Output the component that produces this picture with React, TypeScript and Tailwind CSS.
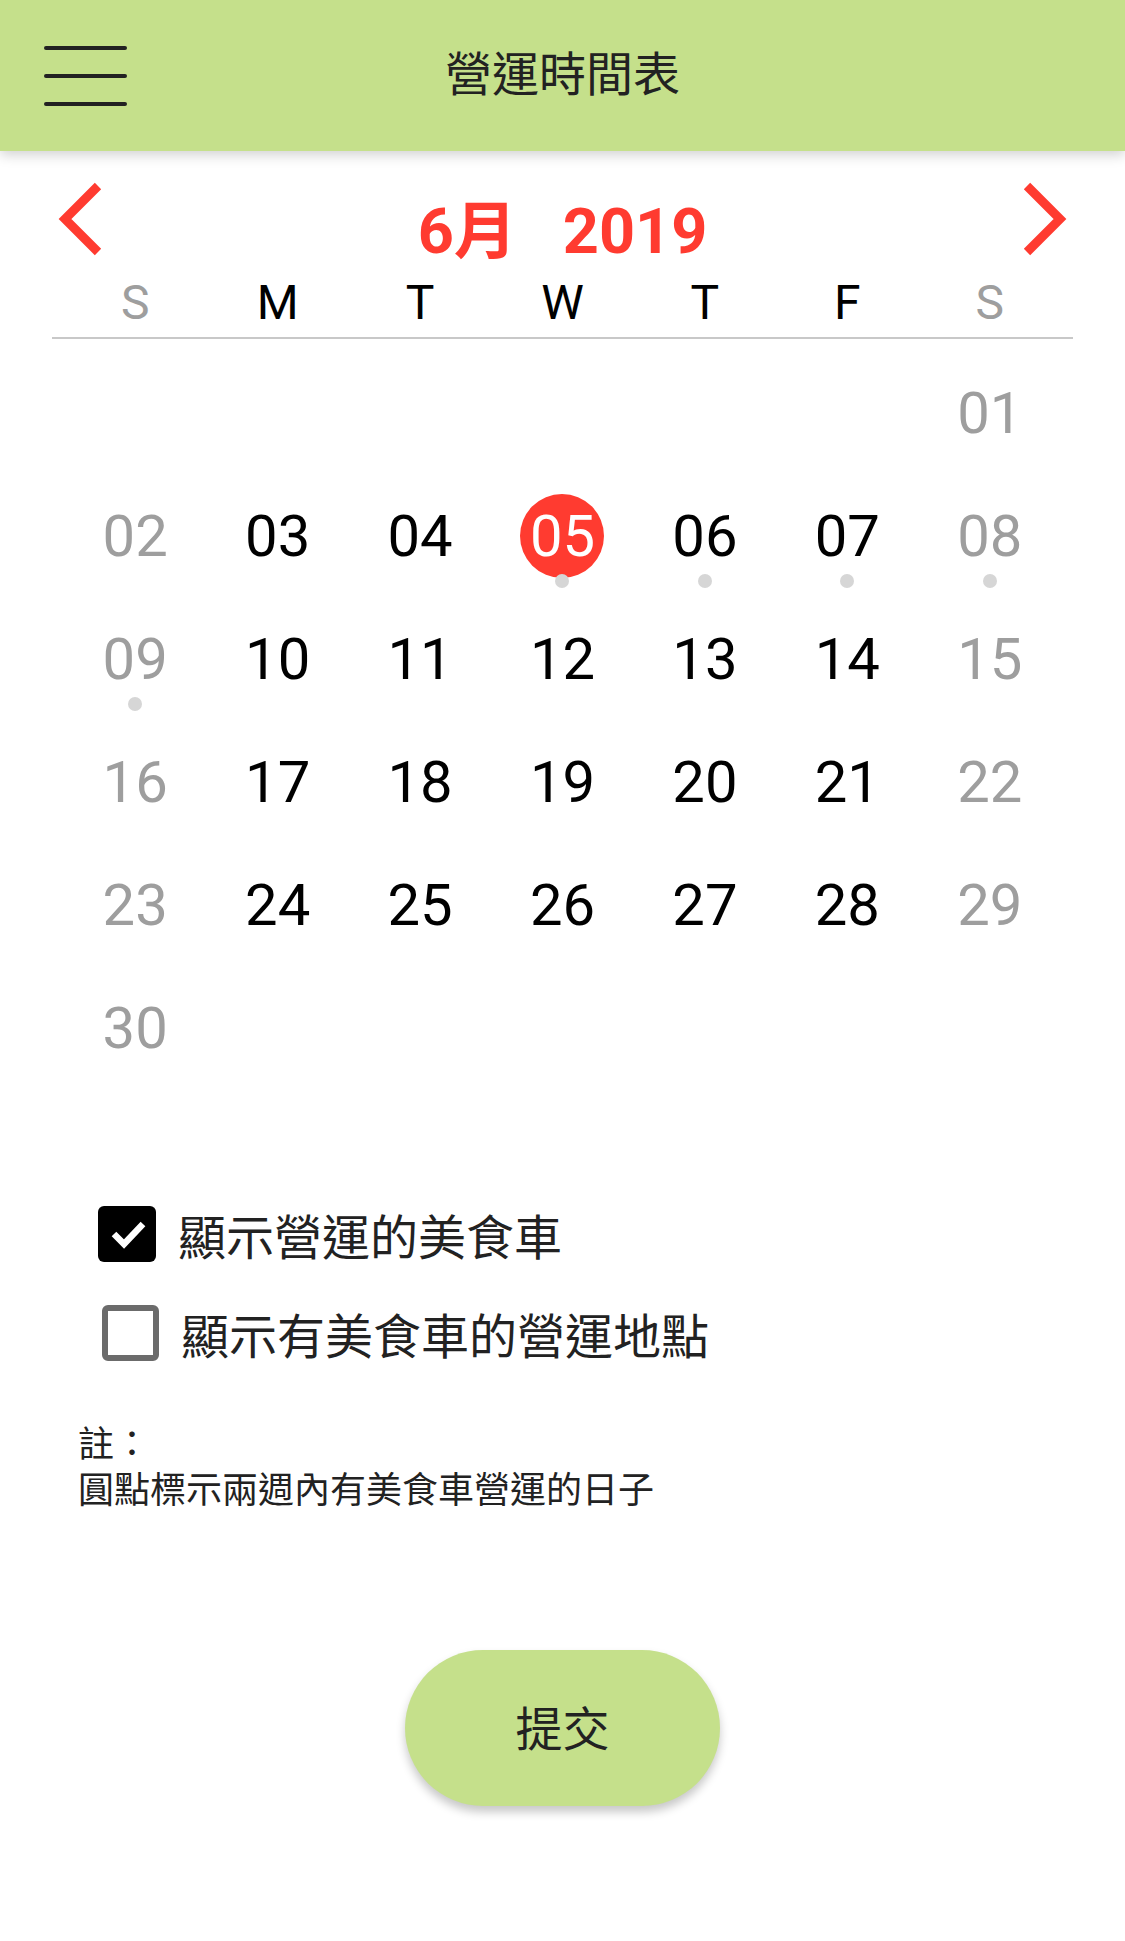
import { useState } from "react";

const weekdays = ["S", "M", "T", "W", "T", "F", "S"];
const dotted = [5, 6, 7, 8, 9];

const Chevron = ({ dir }: { dir: "left" | "right" }) => (
  <svg width="56" height="80" viewBox="0 0 56 80" className="mt-[28px] shrink-0">
    <polyline
      points={dir === "left" ? "48,7 15,40 48,73" : "8,7 41,40 8,73"}
      fill="none"
      stroke="#ff3b30"
      strokeWidth="9"
      strokeLinejoin="miter"
    />
  </svg>
);

const App = () => {
  const [showOpen, setShowOpen] = useState(true);
  const [showPlaces, setShowPlaces] = useState(false);
  const selected = 5;

  // June 2019 starts on a Saturday
  const cells: (number | null)[] = [...Array(6).fill(null), ...Array.from({ length: 30 }, (_, i) => i + 1)];

  return (
    <div className="min-h-[1941px] w-[1125px] bg-white font-[Roboto,'Noto_Sans_CJK_TC',sans-serif]">
      <header className="relative z-10 flex h-[151px] items-center bg-[#c5e08b] shadow-[0_4px_12px_rgba(0,0,0,0.18)]">
        <button className="ml-[44px] flex w-[83px] flex-col gap-[24px]">
          <span className="h-[4px] w-full rounded-full bg-[#222]" />
          <span className="h-[4px] w-full rounded-full bg-[#222]" />
          <span className="h-[4px] w-full rounded-full bg-[#222]" />
        </button>
        <h1 className="mb-[10px] flex-1 text-center font-['Noto_Sans_CJK_TC',sans-serif] text-[47px] leading-none text-[#222]">
          營運時間表
        </h1>
        <div className="w-[127px]" />
      </header>

      <section>
        <div className="flex items-start px-[50px]">
          <Chevron dir="left" />
          <div className="mt-[47px] flex h-[66px] flex-1 items-center justify-center gap-[46px] text-[63px] font-bold leading-none text-[#ff3b30]">
            <span>6月</span>
            <span>2019</span>
          </div>
          <Chevron dir="right" />
        </div>

        <div className="mt-[15px] grid grid-cols-7 px-[64px]">
          {weekdays.map((w, i) => (
            <div
              key={i}
              className={`text-center text-[48px] leading-[48px] ${i === 0 || i === 6 ? "text-[#9e9e9e]" : "text-black"}`}
            >
              {w}
            </div>
          ))}
        </div>
        <div className="mx-[52px] mt-[10px] h-[2px] bg-[#c8c8c8]" />

        <div className="mt-[12px] grid grid-cols-7 px-[64px]">
          {cells.map((d, i) => {
            const weekend = i % 7 === 0 || i % 7 === 6;
            const label = d === null ? "" : String(d).padStart(2, "0");
            return (
              <div key={i} className="relative flex h-[123px] items-center justify-center">
                {d !== null &&
                  (d === selected ? (
                    <span className="flex h-[84px] w-[84px] items-center justify-center rounded-full bg-[#ff3b30] text-[58px] leading-none text-white">
                      {label}
                    </span>
                  ) : (
                    <span className={`text-[58px] leading-none ${weekend ? "text-[#9e9e9e]" : "text-black"}`}>
                      {label}
                    </span>
                  ))}
                {d !== null && dotted.includes(d) && (
                  <span className="absolute left-1/2 top-[100px] h-[14px] w-[14px] -translate-x-1/2 rounded-full bg-[#d6d6d6]" />
                )}
              </div>
            );
          })}
        </div>
      </section>

      <section className="mt-[95px] pl-[98px] font-['Noto_Sans_CJK_TC',sans-serif] text-[#222]">
        <label className="flex h-[99px] cursor-pointer items-center gap-[22px]" onClick={() => setShowOpen(!showOpen)}>
          {showOpen ? (
            <span className="flex h-[56px] w-[58px] items-center justify-center rounded-[6px] bg-black">
              <svg width="56" height="56" viewBox="0 0 56 56">
                <polyline points="15,28 25,38 44,18" fill="none" stroke="white" strokeWidth="6.5" />
              </svg>
            </span>
          ) : (
            <span className="h-[56px] w-[58px] rounded-[6px] border-[6px] border-[#6b6b6b]" />
          )}
          <span className="text-[48px] leading-none">顯示營運的美食車</span>
        </label>
        <label className="flex h-[99px] cursor-pointer items-center gap-[22px]" onClick={() => setShowPlaces(!showPlaces)}>
          {showPlaces ? (
            <span className="ml-[4px] flex h-[56px] w-[57px] items-center justify-center rounded-[6px] bg-black">
              <svg width="56" height="56" viewBox="0 0 56 56">
                <polyline points="15,28 25,38 44,18" fill="none" stroke="white" strokeWidth="6.5" />
              </svg>
            </span>
          ) : (
            <span className="ml-[4px] h-[56px] w-[57px] rounded-[6px] border-[6px] border-[#6b6b6b]" />
          )}
          <span className="text-[48px] leading-none">顯示有美食車的營運地點</span>
        </label>
      </section>

      <div className="ml-[78px] mt-[37px] flex flex-col font-['Noto_Sans_CJK_TC',sans-serif] text-[36px] text-[#222]">
        <p className="h-[46px] leading-[44px]">註：</p>
        <p className="h-[46px] leading-[44px]">圓點標示兩週內有美食車營運的日子</p>
      </div>

      <div className="mt-[139px] flex justify-center">
        <button className="flex h-[156px] w-[315px] items-center justify-center rounded-full bg-[#c5e08b] pb-[6px] font-['Noto_Sans_CJK_TC',sans-serif] text-[47px] leading-none text-[#222] shadow-[0_6px_10px_rgba(0,0,0,0.22)]">
          提交
        </button>
      </div>
    </div>
  );
};

export default App;
